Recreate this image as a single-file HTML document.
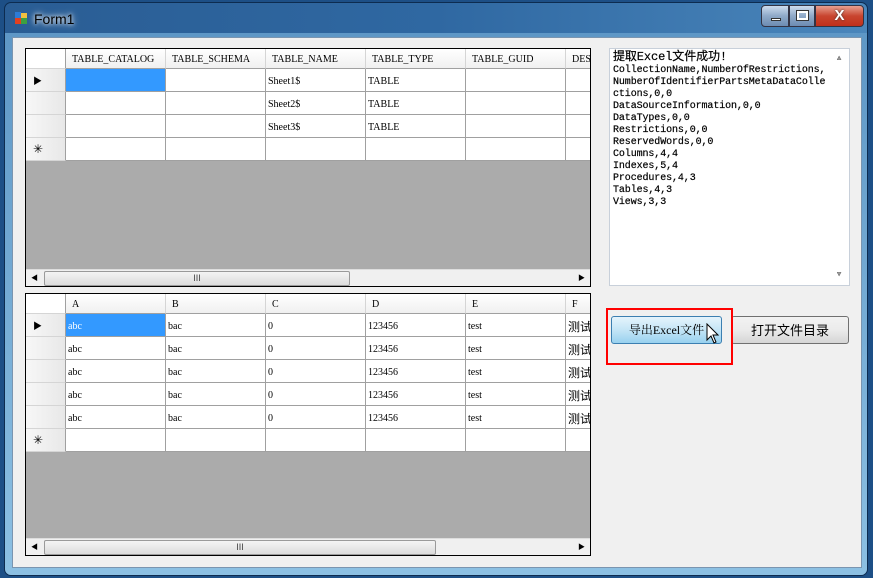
<!DOCTYPE html>
<html><head><meta charset="utf-8"><style>
*{margin:0;padding:0;box-sizing:border-box}
body{width:873px;height:578px;overflow:hidden;background:#1d4f86;font-family:"Liberation Serif","Noto Serif CJK SC",serif;position:relative}
.abs{position:absolute}
#frame{left:4px;top:2px;width:864px;height:574px;border-radius:7px;background:linear-gradient(90deg,#2a5d94,#2f68a2 50%,#4a86bb);border:1px solid #0d2c50}
#frame2{left:5px;top:33px;width:862px;height:542px;border-radius:0 0 6px 6px;background:linear-gradient(#5e97c6,#8cc0e3)}
#client{left:12px;top:37px;width:850px;height:531px;background:#f0f0f0;border:1px solid #7a95b0}
.title{left:34px;top:11px;font:14px "Liberation Sans",sans-serif;color:#000;text-shadow:0 0 8px #fff,0 0 4px #fff}
.grid{background:#ababab;border:1px solid #000;overflow:hidden}
.hdr,.row{position:absolute;left:0;height:20px;display:flex}
.cell{width:100px;height:100%;border-right:1px solid #a0a0a0;border-bottom:1px solid #a0a0a0;background:#fff;font-size:10px;padding:2px 0 0 2px;white-space:nowrap;overflow:hidden;display:flex;align-items:center}
.hdr .cell{background:linear-gradient(#fff,#f0f0f0);border-right:1px solid #d5d5d5;padding-left:6px}
.rh{width:40px;background:linear-gradient(90deg,#f7f7f7,#e8e8e8);border-right:1px solid #a0a0a0;border-bottom:1px solid #d5d5d5;height:100%;position:relative;font-size:9px;display:flex;align-items:center;padding-left:7px}
.sel{background:#3399ff!important;color:#fff}
.sb{position:absolute;left:0;width:100%;height:18px;background:#f0f0f0;border-top:1px solid #ddd}
.thumb{position:absolute;top:1px;height:15px;border:1px solid #9a9a9a;border-radius:2px;background:linear-gradient(#f4f4f4,#dcdcdc);font:9px "Liberation Sans";text-align:center;line-height:13px;color:#444}
.btn{font:12px "Liberation Serif","Noto Serif CJK SC",serif;text-align:center;border:1px solid #707070;border-radius:3px}
.zh{font-size:12px;font-family:"Noto Sans CJK SC",sans-serif}
</style></head><body>
<div id="frame" class="abs"></div>
<div id="frame2" class="abs"></div>
<div class="abs" style="left:15px;top:12px;width:12px;height:12px"><div class="abs" style="left:0;top:0;width:6px;height:6px;background:#2d7bd6"></div><div class="abs" style="left:6px;top:1px;width:6px;height:5px;background:#f0c040"></div><div class="abs" style="left:0;top:6px;width:6px;height:6px;background:#e04020"></div><div class="abs" style="left:6px;top:6px;width:6px;height:6px;background:#3da040"></div></div>
<div class="abs title">Form1</div>
<div class="abs" style="left:761px;top:5px;width:28px;height:22px;border:1px solid #334;border-radius:4px 0 0 4px;background:linear-gradient(#cddcee,#8fa9c8 50%,#6c8bb2)"><div class="abs" style="left:9px;top:12px;width:10px;height:3px;background:#fff;border:1px solid #333"></div></div>
<div class="abs" style="left:789px;top:5px;width:26px;height:22px;border:1px solid #334;background:linear-gradient(#cddcee,#8fa9c8 50%,#6c8bb2)"><div class="abs" style="left:7px;top:5px;width:11px;height:9px;border:2px solid #fff;outline:1px solid #333"></div></div>
<div class="abs" style="left:815px;top:5px;width:49px;height:22px;border:1px solid #334;border-radius:0 4px 4px 0;background:linear-gradient(#e8a090,#c8452f 50%,#c0301c);color:#fff;font:bold 15px 'Liberation Sans';text-align:center;line-height:20px;text-shadow:0 0 2px #333">X</div>
<div id="client" class="abs"></div>

<div class="abs grid" style="left:25px;top:48px;width:566px;height:239px">
 <div class="hdr" style="top:0"><div class="rh" style="height:20px;background:#fff"></div><div class="cell">TABLE_CATALOG</div><div class="cell">TABLE_SCHEMA</div><div class="cell">TABLE_NAME</div><div class="cell">TABLE_TYPE</div><div class="cell">TABLE_GUID</div><div class="cell">DESCRIPTION</div></div>
 <div class="row" style="top:20px;height:23px"><div class="rh">&#9654;</div><div class="cell sel"></div><div class="cell"></div><div class="cell">Sheet1$</div><div class="cell">TABLE</div><div class="cell"></div><div class="cell"></div></div>
 <div class="row" style="top:43px;height:23px"><div class="rh"></div><div class="cell"></div><div class="cell"></div><div class="cell">Sheet2$</div><div class="cell">TABLE</div><div class="cell"></div><div class="cell"></div></div>
 <div class="row" style="top:66px;height:23px"><div class="rh"></div><div class="cell"></div><div class="cell"></div><div class="cell">Sheet3$</div><div class="cell">TABLE</div><div class="cell"></div><div class="cell"></div></div>
 <div class="row" style="top:89px;height:23px"><div class="rh" style="font-size:12px">&#10035;</div><div class="cell"></div><div class="cell"></div><div class="cell"></div><div class="cell"></div><div class="cell"></div><div class="cell"></div></div>
 <div class="sb" style="top:220px"><span class="abs" style="left:5px;top:3px;font-size:7px">&#9664;</span><div class="thumb" style="left:18px;width:306px">III</div><span class="abs" style="right:5px;top:3px;font-size:7px">&#9654;</span></div>
</div>

<div class="abs grid" style="left:25px;top:293px;width:566px;height:263px">
 <div class="hdr" style="top:0"><div class="rh" style="height:20px;background:#fff"></div><div class="cell">A</div><div class="cell">B</div><div class="cell">C</div><div class="cell">D</div><div class="cell">E</div><div class="cell">F</div></div>
 <div class="row" style="top:20px;height:23px"><div class="rh">&#9654;</div><div class="cell sel">abc</div><div class="cell">bac</div><div class="cell">0</div><div class="cell">123456</div><div class="cell">test</div><div class="cell zh">测试</div></div>
 <div class="row" style="top:43px;height:23px"><div class="rh"></div><div class="cell">abc</div><div class="cell">bac</div><div class="cell">0</div><div class="cell">123456</div><div class="cell">test</div><div class="cell zh">测试</div></div>
 <div class="row" style="top:66px;height:23px"><div class="rh"></div><div class="cell">abc</div><div class="cell">bac</div><div class="cell">0</div><div class="cell">123456</div><div class="cell">test</div><div class="cell zh">测试</div></div>
 <div class="row" style="top:89px;height:23px"><div class="rh"></div><div class="cell">abc</div><div class="cell">bac</div><div class="cell">0</div><div class="cell">123456</div><div class="cell">test</div><div class="cell zh">测试</div></div>
 <div class="row" style="top:112px;height:23px"><div class="rh"></div><div class="cell">abc</div><div class="cell">bac</div><div class="cell">0</div><div class="cell">123456</div><div class="cell">test</div><div class="cell zh">测试</div></div>
 <div class="row" style="top:135px;height:23px"><div class="rh" style="font-size:12px">&#10035;</div><div class="cell"></div><div class="cell"></div><div class="cell"></div><div class="cell"></div><div class="cell"></div><div class="cell"></div></div>
 <div class="sb" style="top:244px"><span class="abs" style="left:5px;top:3px;font-size:7px">&#9664;</span><div class="thumb" style="left:18px;width:392px">III</div><span class="abs" style="right:5px;top:3px;font-size:7px">&#9654;</span></div>
</div>

<div class="abs" style="left:609px;top:48px;width:241px;height:238px;background:#fff;border:1px solid #c8d0da;font:10px/12px 'Liberation Mono','Noto Sans CJK SC',monospace;padding:2px 0 0 3px;letter-spacing:-0.1px;white-space:pre;overflow:hidden;color:#000;-webkit-text-stroke:0.2px #000"><span style="font-size:12px">提取Excel文件成功!</span>
CollectionName,NumberOfRestrictions,
NumberOfIdentifierPartsMetaDataColle
ctions,0,0
DataSourceInformation,0,0
DataTypes,0,0
Restrictions,0,0
ReservedWords,0,0
Columns,4,4
Indexes,5,4
Procedures,4,3
Tables,4,3
Views,3,3<div class="abs" style="right:0;top:0;width:17px;height:100%;background:#fff"><span class="abs" style="left:5px;top:4px;font-size:7px;color:#999">&#9650;</span><span class="abs" style="left:5px;bottom:4px;font-size:7px;color:#999">&#9660;</span></div></div>

<div class="abs btn" style="left:611px;top:316px;width:111px;height:28px;line-height:26px;border-color:#3c7fb1;background:linear-gradient(#e5f4fc,#c4e5f6 50%,#98d1ef)">导出Excel文件</div>
<div class="abs btn" style="left:731px;top:316px;width:118px;height:28px;line-height:26px;font-family:'Noto Sans CJK SC',sans-serif;font-size:13px;background:linear-gradient(#f2f2f2,#ebebeb 50%,#d5d5d5)">打开文件目录</div>
<div class="abs" style="left:606px;top:308px;width:127px;height:57px;border:2px solid #f00"></div>
<svg class="abs" style="left:706px;top:323px" width="14" height="22" viewBox="0 0 14 22"><path d="M1 1 L1 17 L5 13 L8 20 L10 19 L7 12 L12 12 Z" fill="#fff" stroke="#000" stroke-width="1"/></svg>
</body></html>
